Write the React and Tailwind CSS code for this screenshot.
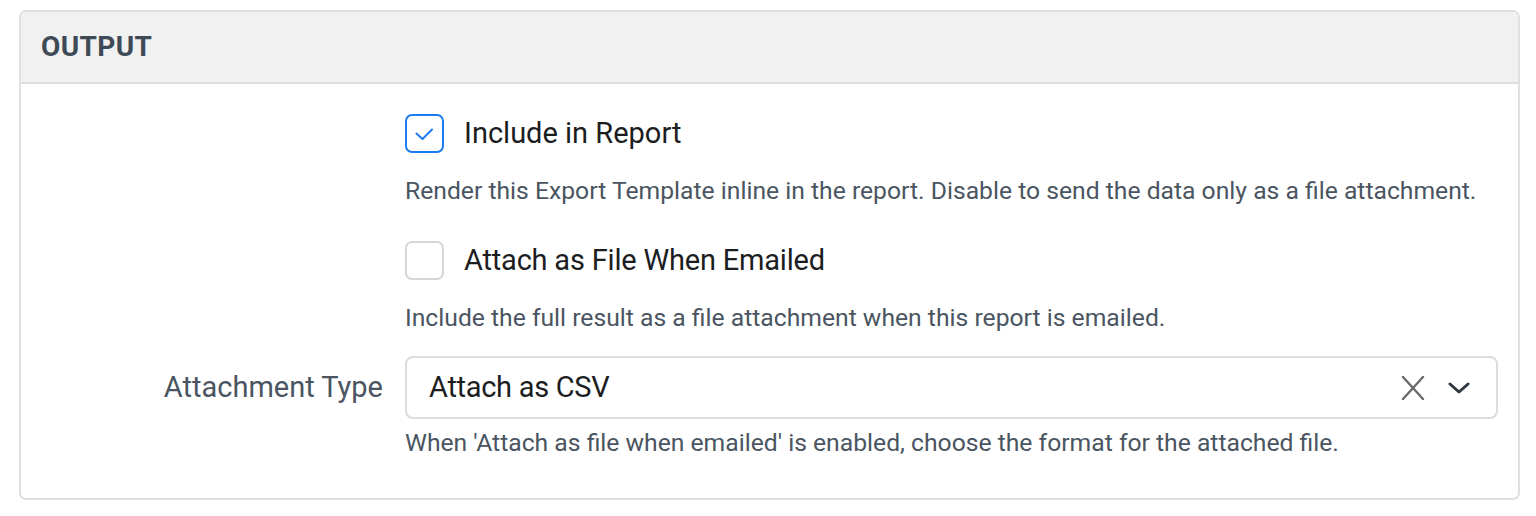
import { useState } from 'react'

const labelCls = 'text-[29px] leading-[39px] text-[#1c1d1f]'
const helpCls = 'text-[24.7px] leading-[32px] text-[#4a5561]'

function Checkbox({ checked, onChange }) {
  return (
    <button
      type="button"
      onClick={onChange}
      className={`w-[39px] h-[39px] shrink-0 rounded-[7px] border-2 bg-white ${
        checked ? 'border-[#1a7bf2]' : 'border-[#d6d6d6]'
      }`}
    >
      {checked && (
        <svg viewBox="0 0 35 35" className="w-full h-full">
          <path d="M9.5 17.5 L15.5 23 L25 13.5" fill="none" stroke="#1a7bf2" strokeWidth="2" strokeLinecap="round" strokeLinejoin="round" />
        </svg>
      )}
    </button>
  )
}

export default function App() {
  const [inReport, setInReport] = useState(true)
  const [attach, setAttach] = useState(false)
  const [type, setType] = useState('Attach as CSV')

  return (
    <div className="pt-[10px] pl-[19px] bg-white min-h-[516px] font-['Roboto','Noto_Sans',sans-serif]">
      <div className="w-[1501px] border-2 border-[#e0e0e0] rounded-[7px] overflow-hidden">
        <div className="h-[72px] bg-[#f1f1f1] border-b-2 border-[#dedede] px-[20px] flex items-center">
          <h2 className="text-[28px] font-bold tracking-[0.4px] text-[#3e4a56]">OUTPUT</h2>
        </div>

        <div className="pt-[30px] pb-[39px] pr-[20px] grid grid-cols-[362px_1fr] gap-x-[22px]">
          <div />
          <div>
            <label className="flex items-center gap-[20px] cursor-pointer">
              <Checkbox checked={inReport} onChange={() => setInReport(v => !v)} />
              <span className={labelCls}>Include in Report</span>
            </label>
            <p className={`${helpCls} mt-[22px]`}>
              Render this Export Template inline in the report. Disable to send the data only as a file attachment.
            </p>

            <label className="flex items-center gap-[20px] cursor-pointer mt-[34px]">
              <Checkbox checked={attach} onChange={() => setAttach(v => !v)} />
              <span className={`${labelCls} tracking-[-0.2px]`}>Attach as File When Emailed</span>
            </label>
            <p className={`${helpCls} mt-[22px]`}>
              Include the full result as a file attachment when this report is emailed.
            </p>
          </div>

          <div className="mt-[22px] h-[63px] flex items-center justify-end">
            <span className="text-[29px] text-[#4a5561]">Attachment Type</span>
          </div>
          <div className="mt-[22px]">
            <div className="h-[63px] border-2 border-[#dcdcdc] rounded-[8px] flex items-center pl-[22px] pr-[26px]">
              <span className="flex-1 text-[29px] tracking-[-0.3px] text-[#1c1d1f]">{type}</span>
              <button type="button" onClick={() => setType('')} className="w-[24px] h-[24px]">
                <svg viewBox="0 0 24 24" className="w-full h-full">
                  <path d="M2 1 L22 23 M22 1 L2 23" stroke="#6b6b6b" strokeWidth="2.4" strokeLinecap="round" />
                </svg>
              </button>
              <svg viewBox="0 0 22 12" className="w-[22px] h-[12px] ml-[23px]">
                <path d="M2 2 L11 10 L20 2" fill="none" stroke="#2f3740" strokeWidth="3" strokeLinecap="round" strokeLinejoin="round" />
              </svg>
            </div>
            <p className={`${helpCls} mt-[8px]`}>
              When 'Attach as file when emailed' is enabled, choose the format for the attached file.
            </p>
          </div>
        </div>
      </div>
    </div>
  )
}
